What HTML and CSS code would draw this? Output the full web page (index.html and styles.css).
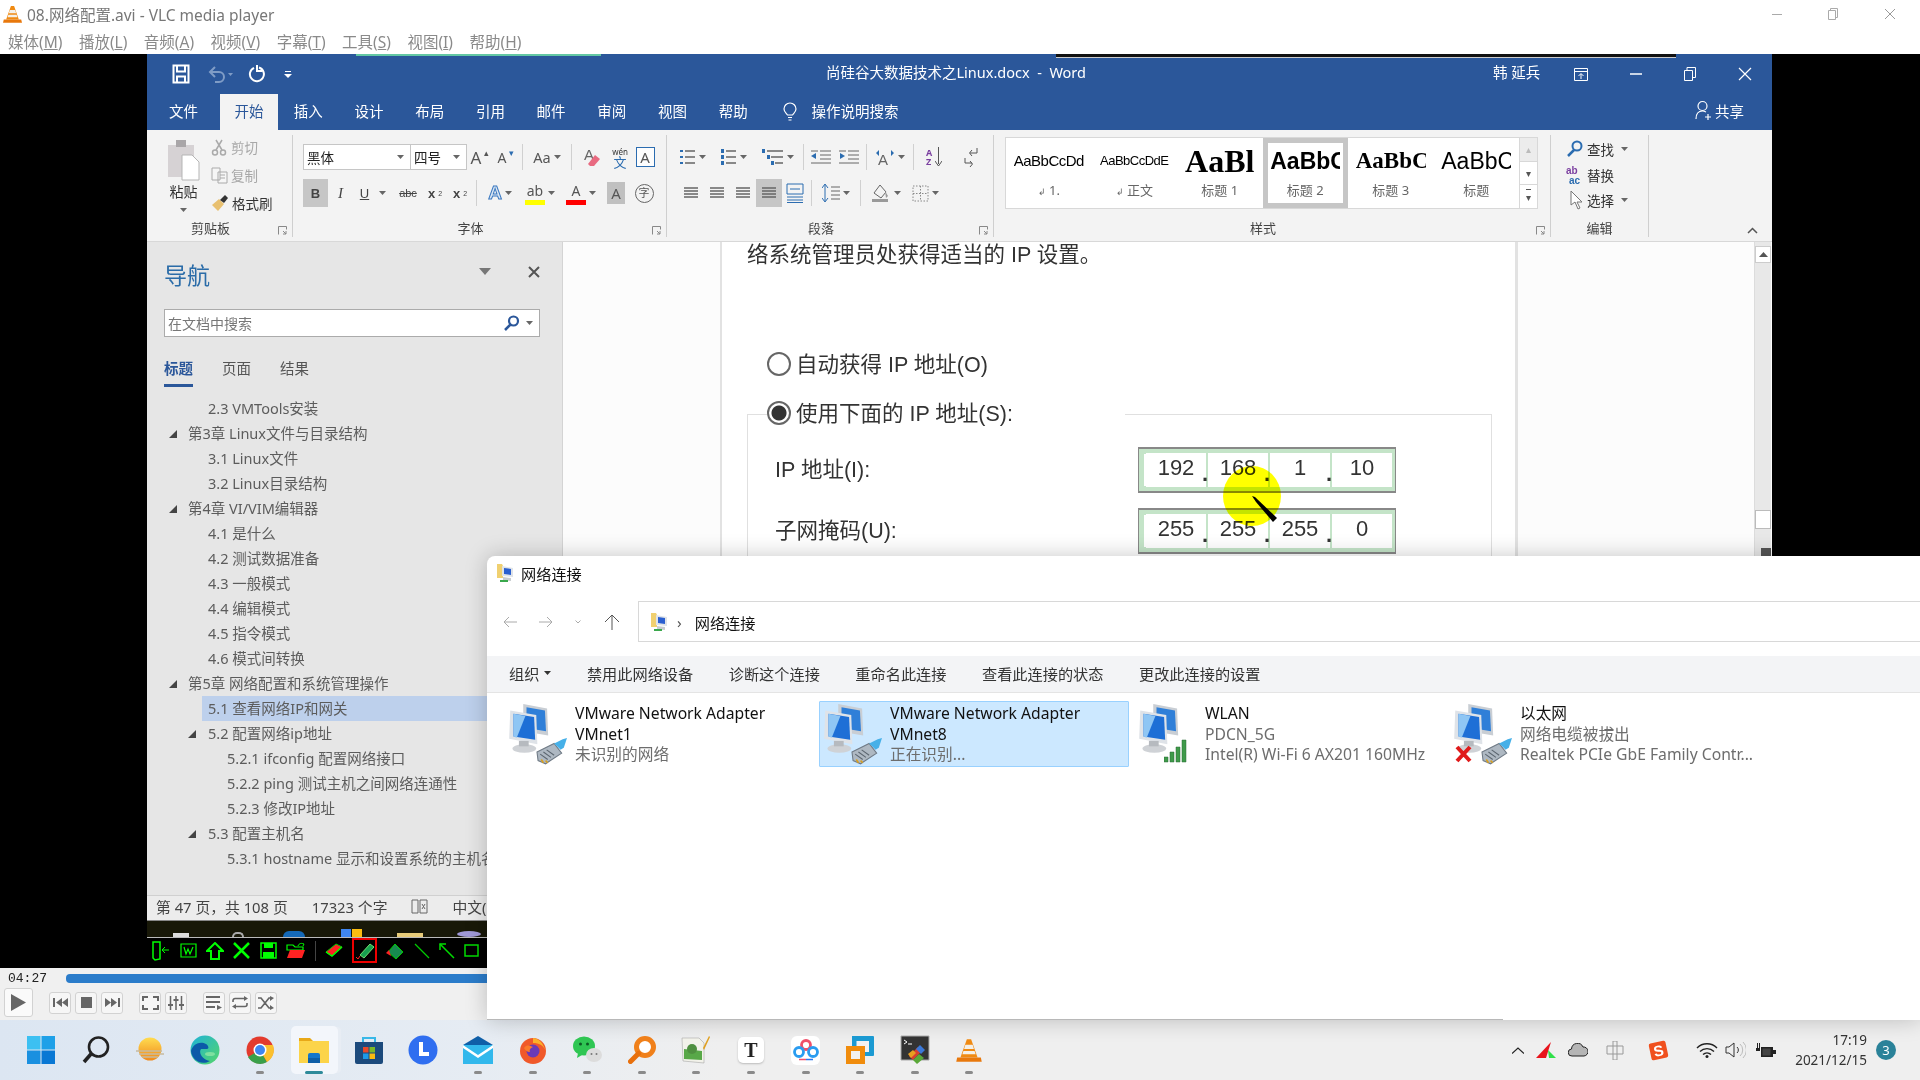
FILE: index.html
```html
<!DOCTYPE html>
<html lang="zh-CN">
<head>
  <meta charset="UTF-8">
  <title>08.网络配置.avi - VLC media player</title>
  <link rel="stylesheet" href="styles.css">
</head>
<body>

<svg class="defs" width="0" height="0">
  <symbol id="cone" viewBox="0 0 24 24">
    <path d="M10 2h4l6 17H4z" fill="#f08a12"/><path d="M8.600 7h6.800l1.200 4H7.400zM6.800 13h10.400l1 3H5.800z" fill="#f4f0e8"/>
    <path d="M1 19h22l1 4H0z" fill="#e8780c"/>
  </symbol>
  <symbol id="net" viewBox="0 0 48 48">
    <path d="M15 1l22 4 1 25-23-4z" fill="#c9ced4"/><path d="M18 4l17 3 1 19-18-3z" fill="#2f7fd8"/>
    <path d="M3 7l24 4 1 27-26-5z" fill="#dfe3e8"/><path d="M6 10l19 3 1 21-20-3z" fill="#1e6fd6"/><path d="M6 10l11 2-8 20-3-1z" fill="#8fc6f4"/>
    <ellipse cx="16" cy="42" rx="11" ry="4" fill="#cfd2d6"/><path d="M11 35h9v5h-9z" fill="#b6babf"/>
  </symbol>
  <symbol id="plug" viewBox="0 0 32 28">
    <path d="M2 14l16-8 7 9-15 10-7-3z" fill="#aeb8c2" stroke="#6f7a85"/>
    <path d="M5 16l7 5M8 14l7 5M11 12l7 5" stroke="#5c6670" fill="none"/><path d="M6 21l2 3M10 22l2 2" stroke="#d8a020" stroke-width="1.500"/>
    <path d="M18 6l8-4 4-1-3 9-3 2z" fill="#46b0e8"/>
  </symbol>
  <symbol id="netfolder" viewBox="0 0 18 20">
    <path d="M0 1h5l1 2v12H0z" fill="#f0d070"/><path d="M5 3l11 2v9l-11-1z" fill="#dfe3e8"/><path d="M7 5l7 1v6l-7-1z" fill="#2a5fd0"/>
    <path d="M6 14l8 1v3l-8-1z" fill="#c8ccd0"/><path d="M3 17h8v2H3z" fill="#3aa84c"/>
  </symbol>
  <symbol id="arrow" viewBox="0 0 7 4"><path d="M0 0h7L3.500 4z" fill="#666"/></symbol>
  <symbol id="launcher" viewBox="0 0 9 9"><path d="M.5 8.500V.5h8v3M5 5l3 3M8 5v3H5" fill="none" stroke="#888"/></symbol>
  <symbol id="lines" viewBox="0 0 16 14"><path d="M1 2h14M1 5h14M1 8h14M1 11h14" stroke="#666" stroke-width="1.500"/></symbol>
</svg>

<header class="vlc-title">
  <svg class="vlc-cone" width="19" height="22"><use href="#cone"/></svg>
  <span>08.网络配置.avi - VLC media player</span>
  <div class="win-btns">
    <span class="win-min"></span>
    <svg width="10" height="12" viewBox="0 0 10 12"><path d="M.5 2.500h7v9h-7zM2.500 2.500V.5h7v9H7.500" fill="none" stroke="#aaa"/></svg>
    <svg width="12" height="12" viewBox="0 0 12 12"><path d="M1 1l10 10M11 1L1 11" stroke="#999"/></svg>
  </div>
</header>
<nav class="vlc-menu">
  <span>媒体(<u>M</u>)</span><span>播放(<u>L</u>)</span><span>音频(<u>A</u>)</span><span>视频(<u>V</u>)</span>
  <span>字幕(<u>T</u>)</span><span>工具(<u>S</u>)</span><span>视图(<u>I</u>)</span><span>帮助(<u>H</u>)</span>
</nav>

<main class="video">
  <div class="word">
    <i class="bar-green"></i><i class="bar-black"></i>

    <div class="w-title">
      <div class="qat">
        <svg width="18" height="20" viewBox="0 0 18 20"><path d="M1.500 1.500h15v17h-15zM5 1.500v6h8v-6M5 18.500v-6h8v6" fill="none" stroke="#fff" stroke-width="2"/></svg>
        <svg class="qat-off" width="26" height="18" viewBox="0 0 26 18"><path d="M3 7h8a5 5 0 0 1 0 10H7M7 2L2 7l5 5" fill="none" stroke="#7f9cc6" stroke-width="2"/><path d="M20 8h5l-2.500 3z" fill="#7f9cc6"/></svg>
        <svg width="18" height="20" viewBox="0 0 18 20"><path d="M11 3.500a7 7 0 1 1-5 .3M9 1v6h5" fill="none" stroke="#fff" stroke-width="2"/></svg>
        <svg width="8" height="9" viewBox="0 0 8 9"><path d="M1 1h6v1H1zM0 4h8L4 8z" fill="#fff"/></svg>
      </div>
      <div class="w-name">尚硅谷大数据技术之Linux.docx &nbsp;-&nbsp; Word</div>
      <div class="w-user">韩 延兵</div>
      <div class="w-ctrl">
        <svg width="14" height="13" viewBox="0 0 14 13"><path d="M.5.500h13v12H.5zM.5 3.500h13M7 11V6M4.500 8L7 5.500 9.500 8" fill="none" stroke="#fff"/></svg>
        <svg width="12" height="12" viewBox="0 0 12 12"><path d="M0 6h12" stroke="#fff" stroke-width="1.500"/></svg>
        <svg width="12" height="14" viewBox="0 0 12 14"><path d="M.5 3.500h8v10h-8zM3 3.500V.5h8.500v10H8.500" fill="none" stroke="#fff"/></svg>
        <svg width="14" height="14" viewBox="0 0 14 14"><path d="M1 1l12 12M13 1L1 13" stroke="#fff" stroke-width="1.200"/></svg>
      </div>
    </div>

    <div class="w-tabs">
      <span class="tab tab-file">文件</span><span class="tab tab-on">开始</span><span class="tab">插入</span><span class="tab">设计</span>
      <span class="tab">布局</span><span class="tab">引用</span><span class="tab">邮件</span><span class="tab">审阅</span><span class="tab">视图</span><span class="tab">帮助</span>
      <svg class="bulb" width="14" height="20" viewBox="0 0 14 20"><path d="M4.500 13C3 11 1 9.500 1 7a6 6 0 0 1 12 0c0 2.500-2 4-3.500 6zM5 15.500h4M5.500 18h3" fill="none" stroke="#fff" stroke-width="1.200"/></svg>
      <span class="tell">操作说明搜索</span>
      <span class="share">
        <svg width="18" height="20" viewBox="0 0 18 20"><circle cx="7.500" cy="6" r="4.500" fill="none" stroke="#fff" stroke-width="1.200"/><path d="M1 19c0-5 2-8 6.500-8 1.500 0 2.500.5 3.500 1M13 14v6M10 17h6" fill="none" stroke="#fff" stroke-width="1.200"/></svg>
        共享
      </span>
    </div>

    <div class="ribbon">
      <section class="group g-clip">
        <div class="g-body clip">
          <div class="paste">
            <svg width="34" height="44" viewBox="0 0 34 44"><path d="M1 8h26v32H1z" fill="#d6d2d4"/><path d="M9 3h10v7H9z" fill="#a9a6a8"/><path d="M15 18h10l7 7v18H15z" fill="#fff" stroke="#b5b5b5"/></svg>
            <b>粘贴</b>
            <svg width="7" height="4"><use href="#arrow"/></svg>
          </div>
          <div class="clip-list">
            <span class="off"><svg width="17" height="17" viewBox="0 0 17 17"><circle cx="4" cy="13.500" r="2.500" fill="none" stroke="#aaa" stroke-width="1.500"/><circle cx="12" cy="13.500" r="2.500" fill="none" stroke="#aaa" stroke-width="1.500"/><path d="M5 11L11 1M11 11L5 1" stroke="#aaa" stroke-width="1.500"/></svg>剪切</span>
            <span class="off"><svg width="17" height="17" viewBox="0 0 17 17"><path d="M1 1h8v12H1zM7 5h9v11H7zM9 8h5M9 11h5" fill="#f6f6f6" stroke="#aaa"/></svg>复制</span>
            <span><svg width="18" height="18" viewBox="0 0 18 18"><path d="M1 11l7-6 5 5-6 7z" fill="#e8c070"/><path d="M9 6l5-5 3 3-4 5z" fill="#333"/></svg>格式刷</span>
          </div>
        </div>
        <div class="g-label">剪贴板<svg class="launch"><use href="#launcher"/></svg></div>
      </section>

      <section class="group g-font">
        <div class="g-body">
          <div class="r-row">
            <div class="combo c-name"><span>黑体</span><svg width="7" height="4"><use href="#arrow"/></svg></div>
            <div class="combo c-size"><span>四号</span><svg width="7" height="4"><use href="#arrow"/></svg></div>
            <span class="ic w26 big">A<sup>▴</sup></span>
            <span class="ic w26 small">A<sup class="blue">▾</sup></span>
            <i class="sep"></i>
            <span class="ic w42 aa">Aa<svg width="7" height="4"><use href="#arrow"/></svg></span>
            <i class="sep"></i>
            <span class="ic w34"><svg width="18" height="20" viewBox="0 0 18 20"><text x="1" y="13" class="svg-a">A</text><path d="M5 17l7-9 5 4-6 7H7z" fill="#e86a80"/></svg></span>
            <span class="ic w22 wen"><small>wén</small>文</span>
            <span class="ic w28"><span class="a-box">A</span></span>
          </div>
          <div class="r-row">
            <span class="ic fmt w25 on b">B</span>
            <span class="ic fmt w25 i">I</span>
            <span class="ic fmt w40 u"><u>U</u><svg width="7" height="4"><use href="#arrow"/></svg></span>
            <span class="ic fmt w30 abc">abc</span>
            <span class="ic fmt w24 x">x<sub>2</sub></span>
            <span class="ic fmt w26 x">x<sup>2</sup></span>
            <i class="sep"></i>
            <span class="ic w40"><span class="a-glow">A</span><svg width="7" height="4"><use href="#arrow"/></svg></span>
            <span class="ic w40"><span class="a-bar yel">ab</span><svg width="7" height="4"><use href="#arrow"/></svg></span>
            <span class="ic w42"><span class="a-bar red">A</span><svg width="7" height="4"><use href="#arrow"/></svg></span>
            <span class="ic w28"><span class="a-shade">A</span></span>
            <span class="ic w28"><span class="zi">字</span></span>
          </div>
        </div>
        <div class="g-label">字体<svg class="launch"><use href="#launcher"/></svg></div>
      </section>

      <section class="group g-para">
        <div class="g-body">
          <div class="r-row">
            <span class="ic w40"><svg width="16" height="16" viewBox="0 0 16 16"><path d="M5 2h10M5 8h10M5 14h10" stroke="#666" stroke-width="1.500"/><path d="M0 1h3v2H0zM0 7h3v2H0zM0 13h3v2H0z" fill="#2b6cb0"/></svg><svg width="7" height="4"><use href="#arrow"/></svg></span>
            <span class="ic w42"><svg width="16" height="16" viewBox="0 0 16 16"><path d="M5 2h10M5 8h10M5 14h10" stroke="#666" stroke-width="1.500"/><path d="M0 0h3v4H0zM0 6h3v4H0zM0 12h3v4H0z" fill="#2b6cb0"/></svg><svg width="7" height="4"><use href="#arrow"/></svg></span>
            <span class="ic w45"><svg width="22" height="16" viewBox="0 0 22 16"><path d="M5 2h16M9 8h12M13 14h8" stroke="#666" stroke-width="1.500"/><path d="M0 0h3v4H0zM5 6h3v4H5zM9 12h3v4H9z" fill="#2b6cb0"/></svg><svg width="7" height="4"><use href="#arrow"/></svg></span>
            <i class="sep"></i>
            <span class="ic w28"><svg width="20" height="16" viewBox="0 0 20 16"><path d="M9 2h11M9 6h11M9 10h11M0 14h20M0 2h7" stroke="#666"/><path d="M0 7l5-3v6z" fill="#2b6cb0"/></svg></span>
            <span class="ic w28"><svg width="20" height="16" viewBox="0 0 20 16"><path d="M9 2h11M9 6h11M9 10h11M0 14h20M0 2h7" stroke="#666"/><path d="M6 7L1 4v6z" fill="#2b6cb0"/></svg></span>
            <i class="sep"></i>
            <span class="ic w40"><svg width="20" height="17" viewBox="0 0 20 17"><text x="3" y="16" class="svg-a">A</text><path d="M1 4l3-3v6zM19 4l-3-3v6z" fill="#2b6cb0"/></svg><svg width="7" height="4"><use href="#arrow"/></svg></span>
            <i class="sep"></i>
            <span class="ic w34 az"><b>A<br>Z</b><svg width="7" height="20" viewBox="0 0 7 20"><path d="M3.500 0v17M0 14l3.500 5L7 14" fill="none" stroke="#555"/></svg></span>
            <span class="ic w40"><svg width="14" height="20" viewBox="0 0 14 20"><path d="M13 1v5H6M8 3L5.500 6 8 9M1 11v5h7M6 14l2.500 3L6 20" fill="none" stroke="#555"/></svg></span>
          </div>
          <div class="r-row para2">
            <span class="ic w26"><svg width="16" height="14"><use href="#lines"/></svg></span>
            <span class="ic w26"><svg width="16" height="14"><use href="#lines"/></svg></span>
            <span class="ic w26"><svg width="16" height="14"><use href="#lines"/></svg></span>
            <span class="ic w26 on"><svg width="16" height="14"><use href="#lines"/></svg></span>
            <span class="ic w26"><svg width="18" height="20" viewBox="0 0 18 20"><path d="M1 1h16v10H1zM1 14h16M1 17h16M1 19.500h16" fill="none" stroke="#2b6cb0"/><path d="M4 6h10" stroke="#2b6cb0"/></svg></span>
            <i class="sep"></i>
            <span class="ic w42"><svg width="18" height="20" viewBox="0 0 18 20"><path d="M3 2v16M0 5l3-4 3 4M0 15l3 4 3-4" fill="none" stroke="#2b6cb0"/><path d="M9 4h9M9 8h9M9 12h9M9 16h9" stroke="#666"/></svg><svg width="7" height="4"><use href="#arrow"/></svg></span>
            <i class="sep"></i>
            <span class="ic w44"><svg width="20" height="20" viewBox="0 0 20 20"><path d="M3 10l6-8 6 7-5 6z" fill="none" stroke="#666"/><path d="M14 8l3 5-2 2zM1 16h16v3H1z" fill="#9a9a9a"/></svg><svg width="7" height="4"><use href="#arrow"/></svg></span>
            <span class="ic w34"><svg width="17" height="17" viewBox="0 0 17 17"><path d="M1 1h15v15H1zM8.500 1v15M1 8.500h15" fill="none" stroke="#888" stroke-dasharray="1.500 1.500"/></svg><svg width="7" height="4"><use href="#arrow"/></svg></span>
          </div>
        </div>
        <div class="g-label">段落<svg class="launch"><use href="#launcher"/></svg></div>
      </section>

      <section class="group g-styles">
        <div class="g-body">
          <div class="gallery">
            <div class="st"><span class="st-p p1">AaBbCcDd</span><span class="st-n"><small>↲</small> 1.</span></div>
            <div class="st"><span class="st-p p2">AaBbCcDdE</span><span class="st-n"><small>↲</small> 正文</span></div>
            <div class="st"><span class="st-p p3">AaBl</span><span class="st-n">标题 1</span></div>
            <div class="st st-on"><span class="st-p p4">AaBbC</span><span class="st-n">标题 2</span></div>
            <div class="st"><span class="st-p p5">AaBbC</span><span class="st-n">标题 3</span></div>
            <div class="st"><span class="st-p p6">AaBbC</span><span class="st-n">标题</span></div>
            <div class="st-scroll">
              <span class="st-off">▴</span><span>▾</span><span class="st-more">▾</span>
            </div>
          </div>
        </div>
        <div class="g-label">样式<svg class="launch"><use href="#launcher"/></svg></div>
      </section>

      <section class="group g-edit">
        <div class="g-body edit">
          <span><svg width="18" height="18" viewBox="0 0 18 18"><circle cx="11" cy="6" r="4.500" fill="none" stroke="#2b6cb0" stroke-width="2"/><path d="M8 10l-6 6" stroke="#2b6cb0" stroke-width="2.500"/></svg>查找<svg class="edit-arrow" width="7" height="4"><use href="#arrow"/></svg></span>
          <span><svg width="18" height="20" viewBox="0 0 18 20"><text x="0" y="9" class="svg-ab pur">ab</text><text x="3" y="19" class="svg-ab blu">ac</text></svg>替换</span>
          <span><svg width="18" height="20" viewBox="0 0 18 20"><path d="M5 1v14l4-3 3 7 2-1-3-6h5z" fill="#fff" stroke="#777"/></svg>选择<svg class="edit-arrow" width="7" height="4"><use href="#arrow"/></svg></span>
        </div>
        <div class="g-label">编辑</div>
      </section>
      <svg class="collapse" width="11" height="7" viewBox="0 0 11 7"><path d="M1 6l4.500-4.500L10 6" fill="none" stroke="#555" stroke-width="1.500"/></svg>
    </div>

    <div class="w-main">
      <aside class="nav">
        <div class="nav-head">
          <h2>导航</h2>
          <svg width="12" height="7" viewBox="0 0 12 7"><path d="M0 0h12L6 7z" fill="#777"/></svg>
          <svg class="nav-x" width="12" height="12" viewBox="0 0 12 12"><path d="M1 1l10 10M11 1L1 11" stroke="#555" stroke-width="2"/></svg>
        </div>
        <div class="nav-search">
          <span>在文档中搜索</span>
          <svg width="17" height="17" viewBox="0 0 17 17"><circle cx="10.500" cy="6" r="4.500" fill="none" stroke="#2b579a" stroke-width="2.200"/><path d="M7.500 9.500L2 15" stroke="#2b579a" stroke-width="2.500"/></svg>
          <svg width="7" height="4"><use href="#arrow"/></svg>
        </div>
        <div class="nav-tabs"><span class="nt-on">标题</span><span>页面</span><span>结果</span></div>
        <ul class="nav-list">
          <li class="l2">2.3 VMTools安装</li>
          <li class="l1 open">第3章 Linux文件与目录结构</li>
          <li class="l2">3.1 Linux文件</li>
          <li class="l2">3.2 Linux目录结构</li>
          <li class="l1 open">第4章 VI/VIM编辑器</li>
          <li class="l2">4.1 是什么</li>
          <li class="l2">4.2 测试数据准备</li>
          <li class="l2">4.3 一般模式</li>
          <li class="l2">4.4 编辑模式</li>
          <li class="l2">4.5 指令模式</li>
          <li class="l2">4.6 模式间转换</li>
          <li class="l1 open">第5章 网络配置和系统管理操作</li>
          <li class="l2 cur">5.1 查看网络IP和网关</li>
          <li class="l2 open">5.2 配置网络ip地址</li>
          <li class="l3">5.2.1 ifconfig 配置网络接口</li>
          <li class="l3">5.2.2 ping 测试主机之间网络连通性</li>
          <li class="l3">5.2.3 修改IP地址</li>
          <li class="l2 open">5.3 配置主机名</li>
          <li class="l3">5.3.1 hostname 显示和设置系统的主机名</li>
        </ul>
      </aside>

      <div class="doc">
        <article class="page">
          <p class="doc-line">络系统管理员处获得适当的 IP 设置。</p>
          <div class="radio-row"><i class="radio"></i>自动获得 IP 地址(O)</div>
          <div class="radio-row"><i class="radio radio-on"></i>使用下面的 IP 地址(S):</div>
          <div class="ip-frame">
            <div class="ip-row"><span>IP 地址(I):</span>
              <div class="ip-box"><b>192</b><em>.</em><b>168</b><em>.</em><b>1</b><em>.</em><b>10</b></div>
            </div>
            <div class="ip-row"><span>子网掩码(U):</span>
              <div class="ip-box"><b>255</b><em>.</em><b>255</b><em>.</em><b>255</b><em>.</em><b>0</b></div>
            </div>
          </div>
          <div class="pointer">
            <svg width="26" height="26" viewBox="0 0 26 26"><path d="M0 0l3 1 22 21-4 4L4 6z" fill="#000"/></svg>
          </div>
        </article>
        <div class="scroll">
          <span class="sb-up"><svg width="9" height="5" viewBox="0 0 9 5"><path d="M4.500 0L9 5H0z" fill="#555"/></svg></span>
          <span class="sb-thumb"></span>
          <span class="sb-mark"></span>
        </div>
      </div>
    </div>

    <footer class="w-status">
      <span>第 47 页，共 108 页</span><span class="st-words">17323 个字</span>
      <svg width="17" height="15" viewBox="0 0 17 15"><path d="M1 1h6v13H1zM9 1h7v13H9zM11 5l3 5M14 5l-3 5" fill="none" stroke="#666"/></svg>
      <span>中文(中国)</span>
    </footer>

    <div class="w-desk">
      <i class="d-white"></i><i class="d-ring"></i><i class="d-dome"></i><i class="d-blue"></i><i class="d-yel"></i><i class="d-folder"></i><i class="d-puff"></i>
    </div>
    <div class="pen-bar">
      <svg width="20" height="20" viewBox="0 0 20 20"><path d="M2 1h7v17l-5 1-2-2zM9 1v15" fill="none" stroke="#0f0" stroke-width="1.500"/><path d="M18 9h-6M14 6l-3 3 3 3" fill="none" stroke="#0f0"/></svg>
      <svg width="17" height="15" viewBox="0 0 17 15"><path d="M1 1h15v13H1zM4 4l2 7 2-5 2 5 3-7" fill="none" stroke="#0f0" stroke-width="1.200"/></svg>
      <svg width="18" height="18" viewBox="0 0 18 18"><path d="M9 1l8 8h-4v8H5V9H1z" fill="none" stroke="#0f0" stroke-width="2"/></svg>
      <svg width="17" height="17" viewBox="0 0 17 17"><path d="M1 1l15 15M16 1L1 16" stroke="#0f0" stroke-width="2.500"/></svg>
      <svg width="17" height="17" viewBox="0 0 17 17"><path d="M1 1h15v15H1z" fill="none" stroke="#0f0" stroke-width="1.500"/><path d="M4 1h9v5H4zM3 10h11v6H3z" fill="#0f0"/></svg>
      <svg width="20" height="17" viewBox="0 0 20 17"><path d="M1 3h6l2 2h8v3H1z" fill="none" stroke="#0f0" stroke-width="1.200"/><path d="M1 16l3-8h15l-3 8z" fill="#f22"/><path d="M12 4c1-3 4-3 6-2l-1 2" fill="none" stroke="#0f0"/></svg>
      <i class="pen-sep"></i>
      <svg width="18" height="15" viewBox="0 0 18 15"><path d="M1 9l10-8 6 3-10 9z" fill="#f22" stroke="#0c0"/><path d="M1 9l6 4 10-9" fill="none" stroke="#0f0" stroke-width="1.500"/></svg>
      <span class="pen-on"><svg width="20" height="18" viewBox="0 0 20 18"><path d="M5 13L15 2l4 3L9 16z" fill="#17a050" stroke="#6fe06f"/><path d="M1 15l2 2 2-3" fill="none" stroke="#f22"/></svg></span>
      <svg width="18" height="18" viewBox="0 0 18 18"><path d="M2 10l7-8 8 8-7 7z" fill="#178a50" stroke="#0c0"/><path d="M0 11l3-3 2 6z" fill="#f22"/></svg>
      <svg width="16" height="16" viewBox="0 0 16 16"><path d="M1 1l14 14" stroke="#0c0" stroke-width="1.200"/></svg>
      <svg width="16" height="16" viewBox="0 0 16 16"><path d="M1 1l14 14" stroke="#0d0" stroke-width="1.500"/><path d="M1 7V1h6" fill="none" stroke="#0d0" stroke-width="1.500"/></svg>
      <svg width="15" height="13" viewBox="0 0 15 13"><path d="M1 1h13v11H1z" fill="none" stroke="#0d0" stroke-width="1.500"/></svg>
    </div>
  </div>
</main>

<section class="vlc-ctl">
  <div class="seek"><span class="time">04:27</span><div class="seek-track"></div></div>
  <div class="ctl-row">
    <button class="cb cb-play"><svg width="15" height="17" viewBox="0 0 15 17"><path d="M0 0l15 8.500L0 17z" fill="#666"/></svg></button>
    <div class="cb-group">
      <button class="cb"><svg width="15" height="9" viewBox="0 0 15 9"><path d="M0 0h2v9H0zM9 0v9L3 4.500zM15 0v9L9 4.500z" fill="#666"/></svg></button>
      <button class="cb"><svg width="11" height="11"><path d="M0 0h11v11H0z" fill="#666"/></svg></button>
      <button class="cb"><svg width="15" height="9" viewBox="0 0 15 9"><path d="M15 0h-2v9h2zM6 0v9l6-4.500zM0 0v9l6-4.500z" fill="#666"/></svg></button>
    </div>
    <div class="cb-group">
      <button class="cb"><svg width="17" height="14" viewBox="0 0 17 14"><path d="M1 5V1h5M11 1h5v4M16 9v4h-5M6 13H1V9" fill="none" stroke="#666" stroke-width="2"/></svg></button>
      <button class="cb"><svg width="16" height="14" viewBox="0 0 16 14"><path d="M2.500 0v14M8 0v14M13.500 0v14" stroke="#666" stroke-width="1.500"/><path d="M0 8h5v2H0zM5.500 3h5v2h-5zM11 8h5v2h-5z" fill="#666"/></svg></button>
    </div>
    <div class="cb-group">
      <button class="cb"><svg width="16" height="14" viewBox="0 0 16 14"><path d="M0 1h14M0 6h14M0 11h9" stroke="#666" stroke-width="1.800"/><path d="M11 9l5 2.500-5 2.500z" fill="#666"/></svg></button>
      <button class="cb"><svg width="16" height="13" viewBox="0 0 16 13"><path d="M1 6V4.500a2 2 0 0 1 2-2h11M15 7v1.500a2 2 0 0 1-2 2H2" fill="none" stroke="#666" stroke-width="1.600"/><path d="M12 0l4 2.500L12 5zM4 8l-4 2.500L4 13z" fill="#666"/></svg></button>
      <button class="cb"><svg width="16" height="14" viewBox="0 0 16 14"><path d="M0 2h3l8 10h2M0 12h3l8-10h2" fill="none" stroke="#666" stroke-width="1.700"/><path d="M12 0l4 2-4 3zM12 9l4 3-4 2z" fill="#666"/></svg></button>
    </div>
  </div>
</section>

<section class="explorer">
  <div class="ex-title"><svg width="18" height="20"><use href="#netfolder"/></svg>网络连接</div>
  <div class="ex-nav">
    <svg class="ex-dim" width="14" height="12" viewBox="0 0 14 12"><path d="M14 6H1M6 1L1 6l5 5" fill="none" stroke="#aaa"/></svg>
    <svg class="ex-dim" width="14" height="12" viewBox="0 0 14 12"><path d="M0 6h13M8 1l5 5-5 5" fill="none" stroke="#aaa"/></svg>
    <svg class="ex-dim" width="6" height="4" viewBox="0 0 6 4"><path d="M.5.500L3 3 5.500.5" fill="none" stroke="#aaa"/></svg>
    <svg class="ex-up" width="16" height="16" viewBox="0 0 16 16"><path d="M8 16V1M1 8l7-7 7 7" fill="none" stroke="#555"/></svg>
    <div class="ex-addr">
      <svg width="18" height="20"><use href="#netfolder"/></svg>
      <span class="ex-crumb">›</span>
      <span>网络连接</span>
    </div>
  </div>
  <div class="ex-tools">
    <span>组织<svg width="7" height="4" viewBox="0 0 7 4"><path d="M0 0h7L3.500 4z" fill="#333"/></svg></span>
    <span>禁用此网络设备</span><span>诊断这个连接</span><span>重命名此连接</span><span>查看此连接的状态</span><span>更改此连接的设置</span>
  </div>
  <div class="ex-list">
    <div class="tile">
      <div class="t-icon"><svg class="t-net" width="52" height="52"><use href="#net"/></svg><svg class="t-badge" width="36" height="30"><use href="#plug"/></svg></div>
      <div class="t-text"><span class="t-main">VMware Network Adapter VMnet1</span><span>未识别的网络</span></div>
    </div>
    <div class="tile tile-on">
      <div class="t-icon"><svg class="t-net" width="52" height="52"><use href="#net"/></svg><svg class="t-badge" width="36" height="30"><use href="#plug"/></svg></div>
      <div class="t-text"><span class="t-main">VMware Network Adapter VMnet8</span><span>正在识别...</span></div>
    </div>
    <div class="tile">
      <div class="t-icon"><svg class="t-net" width="52" height="52"><use href="#net"/></svg>
        <svg class="t-badge" width="26" height="26" viewBox="0 0 26 26"><path d="M0 20h4v5H0zM6 15h4v10H6zM12 10h4v15h-4zM18 3h4v22h-4z" fill="#3f9a4a" stroke="#2b6a35" stroke-width=".5"/></svg></div>
      <div class="t-text"><span class="t-main">WLAN</span><span>PDCN_5G</span><span>Intel(R) Wi-Fi 6 AX201 160MHz</span></div>
    </div>
    <div class="tile">
      <div class="t-icon"><svg class="t-net" width="52" height="52"><use href="#net"/></svg><svg class="t-badge" width="36" height="30"><use href="#plug"/></svg>
        <svg class="t-x" width="17" height="18" viewBox="0 0 17 18"><path d="M2 2l13 14M15 2L2 16" stroke="#e01b1b" stroke-width="4"/></svg></div>
      <div class="t-text"><span class="t-main">以太网</span><span>网络电缆被拔出</span><span>Realtek PCIe GbE Family Contr...</span></div>
    </div>
  </div>
</section>

<footer class="taskbar">
  <div class="apps">
    <span class="app"><svg width="30" height="30" viewBox="0 0 30 30"><path d="M1 1h13.500v13.500H1z" fill="#3cc0f2"/><path d="M15.500 1H29v13.500H15.500z" fill="#1ea0e8"/><path d="M1 15.500h13.500V29H1z" fill="#1a90e0"/><path d="M15.500 15.500H29V29H15.500z" fill="#0a78d4"/></svg></span>
    <span class="app"><svg width="28" height="28" viewBox="0 0 28 28"><circle cx="16.500" cy="11" r="9.500" fill="none" stroke="#222" stroke-width="2.600"/><path d="M9 18l-7 8" stroke="#222" stroke-width="3.500"/></svg></span>
    <span class="app"><svg width="28" height="28" viewBox="0 0 28 28"><defs><linearGradient id="sun" x1="0" y1="0" x2="0" y2="1"><stop offset="0" stop-color="#ffdc50"/><stop offset="1" stop-color="#f08a1c"/></linearGradient></defs><circle cx="14" cy="13" r="11.500" fill="url(#sun)"/><path d="M0 15h26M3 18h25M6 21h16" stroke="#c8bba0" stroke-width="1.500"/></svg></span>
    <span class="app"><svg width="30" height="30" viewBox="0 0 30 30"><defs><linearGradient id="edge" x1="0" y1="0" x2="1" y2="1"><stop offset="0" stop-color="#1fb2d8"/><stop offset="1" stop-color="#55d66a"/></linearGradient></defs><circle cx="15" cy="15" r="14.500" fill="url(#edge)"/><path d="M1 16c2-8 10-10 15-7 3 2 3 5 1 5h-6c-3 4 2 11 9 12-9 5-18-1-19-10z" fill="#0c5aa8"/><ellipse cx="20" cy="19" rx="5" ry="2" fill="#7fe0a0"/></svg></span>
    <span class="app app-dot"><svg width="28" height="28" viewBox="0 0 28 28"><circle cx="14" cy="14" r="13.500" fill="#e33b2e"/><path d="M14 14L2 21A14 14 0 0 0 21 26z" fill="#3aa04a"/><path d="M14 14l7 12A14 14 0 0 0 27 9H14z" fill="#fbc02d"/><circle cx="14" cy="14" r="6.500" fill="#fff"/><circle cx="14" cy="14" r="5" fill="#3f86f0"/></svg></span>
    <span class="app app-on">
      <svg width="32" height="28" viewBox="0 0 32 28"><path d="M1 2h11l3 3H1z" fill="#e8a818"/><path d="M1 5h30v22H1z" fill="#fcd44a"/><path d="M10 19a2 2 0 0 1 2-2h8a2 2 0 0 1 2 2v8H10z" fill="#1476cc"/><path d="M10 22h12v5H10z" fill="#0f5fa8"/></svg>
    </span>
    <span class="app"><svg width="30" height="30" viewBox="0 0 30 30"><path d="M1 7h28v20a2 2 0 0 1-2 2H3a2 2 0 0 1-2-2z" fill="#1c4a7c"/><path d="M9 7V3h12v4" fill="none" stroke="#38b8e8" stroke-width="2"/><path d="M9 12h5.500v5.500H9z" fill="#e84a2a"/><path d="M15.500 12H21v5.500h-5.500z" fill="#7cb828"/><path d="M9 18.500h5.500V24H9z" fill="#1e9ae8"/><path d="M15.500 18.500H21V24h-5.500z" fill="#fbbc10"/></svg></span>
    <span class="app"><svg width="30" height="30" viewBox="0 0 30 30"><circle cx="15" cy="15" r="14.500" fill="#2f6ef0"/><path d="M11 7h4v10h6v4H11z" fill="#fff"/></svg></span>
    <span class="app app-dot"><svg width="30" height="28" viewBox="0 0 30 28"><path d="M0 9L15 0l15 9v3H0z" fill="#0f5fa8"/><path d="M0 9h30v19H0z" fill="#32b8ec"/><path d="M0 9l15 10L30 9v3L15 22 0 12z" fill="#fff"/></svg></span>
    <span class="app app-dot"><svg width="28" height="28" viewBox="0 0 28 28"><circle cx="14" cy="15" r="13" fill="#f0592a"/><path d="M14 2c4 0 8 3 10 7l3 6C24 9 20 7 14 7z" fill="#fbb02a"/><circle cx="14" cy="15" r="6.500" fill="#6a3ab8"/><path d="M5 12c3-4 6-2 9-1-3 1-4 3-3 5-3 0-5-2-6-4z" fill="#fb7a2a"/></svg></span>
    <span class="app app-dot"><svg width="30" height="28" viewBox="0 0 30 28"><ellipse cx="12" cy="10" rx="11" ry="9.500" fill="#2fc653"/><path d="M6 17l-1 5 5-3z" fill="#2fc653"/><circle cx="8.500" cy="8" r="1.500" fill="#0c5a24"/><circle cx="15.500" cy="8" r="1.500" fill="#0c5a24"/><ellipse cx="22" cy="19" rx="8" ry="7" fill="#dcdcdc"/><circle cx="19.500" cy="18" r="1" fill="#777"/><circle cx="24.500" cy="18" r="1" fill="#777"/></svg></span>
    <span class="app app-dot"><svg width="28" height="28" viewBox="0 0 28 28"><circle cx="17" cy="11" r="8.500" fill="#fff" stroke="#f0801a" stroke-width="5"/><path d="M10.500 17.500L2.500 25.500" stroke="#e8700c" stroke-width="5" stroke-linecap="round"/></svg></span>
    <span class="app app-dot"><svg width="30" height="30" viewBox="0 0 30 30"><path d="M1 3h17l5 5v20L2 26z" fill="#f2f2ea" stroke="#999" stroke-width=".5"/><path d="M3 14l18 2v9L3 24z" fill="#58a848"/><circle cx="11" cy="14" r="5" fill="#4f9040"/><path d="M22 13L28 1l1 1-6 13z" fill="#e0a020"/></svg></span>
    <span class="app app-dot"><span class="t-app">T</span></span>
    <span class="app app-dot"><span class="baidu"><svg width="26" height="22" viewBox="0 0 26 22"><circle cx="13" cy="6" r="4.500" fill="none" stroke="#f0506a" stroke-width="2.800"/><circle cx="6" cy="13" r="4.500" fill="none" stroke="#2a9cf0" stroke-width="2.800"/><circle cx="20" cy="13" r="4.500" fill="none" stroke="#2a9cf0" stroke-width="2.800"/><path d="M6 20.500h7" stroke="#f0506a" stroke-width="1.500"/><path d="M13 20.500h7" stroke="#2a78f0" stroke-width="1.500"/></svg></span></span>
    <span class="app app-dot"><svg width="30" height="30" viewBox="0 0 30 30"><path d="M7 1h21a1 1 0 0 1 1 1v18a1 1 0 0 1-1 1H7z" fill="#1b9ad2"/><path d="M11.500 6H24v11H11.500z" fill="#f2f2f2"/><path d="M1 11h19v18H1z" fill="#f08c0c"/><path d="M6 16h9v8H6z" fill="#f2f2f2"/></svg></span>
    <span class="app app-dot"><svg width="30" height="30" viewBox="0 0 30 30"><path d="M1 1h28v24H1z" fill="#333" stroke="#aaa"/><path d="M4 5l3 2-3 2M8 9h4" stroke="#fff" fill="none"/><path d="M9 21l9-9 4 4-9 9z" fill="#d84030"/><path d="M16 14l4-4 5 5-4 4z" fill="#3a78d8"/><path d="M13 25l6-6 5 4-7 6z" fill="#5aa838"/><path d="M8 19l5-4 3 3-5 5z" fill="#e8a020"/></svg></span>
    <span class="app app-dot"><svg width="26" height="30" viewBox="0 0 24 28"><use href="#cone"/></svg></span>
  </div>
  <div class="tray">
    <svg width="12" height="7" viewBox="0 0 12 7"><path d="M0 6.500L6 1l6 5.500" fill="none" stroke="#222" stroke-width="1.200"/></svg>
    <svg width="20" height="16" viewBox="0 0 20 16"><path d="M0 16L15 0l-5 16z" fill="#e8141c"/><path d="M12 8l8 8h-7z" fill="#2fe04a"/></svg>
    <svg width="20" height="14" viewBox="0 0 20 14"><path d="M4 13a3.500 3.500 0 0 1-.5-7A6 6 0 0 1 15 4a4.500 4.500 0 0 1 1 9z" fill="#b5b5b5" stroke="#222"/></svg>
    <span class="t-zh"><svg width="18" height="19" viewBox="0 0 18 19"><path d="M1 5h16v8H1zM7 0h4v19H7z" fill="none" stroke="#999"/></svg></span>
    <span class="t-s">S</span>
    <svg width="22" height="16" viewBox="0 0 22 16"><path d="M1 6a14 14 0 0 1 20 0M4 9.500a10 10 0 0 1 14 0M7 12.500a6 6 0 0 1 8 0" fill="none" stroke="#222" stroke-width="1.400"/><circle cx="11" cy="14.500" r="1.500" fill="#222"/></svg>
    <svg class="t-spk" width="21" height="16" viewBox="0 0 21 16"><path d="M1 5h3l5-4v14l-5-4H1z" fill="#eee" stroke="#333"/><path d="M12 5a4 4 0 0 1 0 6" fill="none" stroke="#333"/><path d="M15 2a8 8 0 0 1 0 12M18 0a11 11 0 0 1 0 16" fill="none" stroke="#bbb"/></svg>
    <svg class="t-bat" width="20" height="16" viewBox="0 0 20 16"><path d="M5 5h12v10H5z" fill="#222"/><path d="M17 8h3v4h-3zM0 6h4v3H0zM1 1h1v5H1zM3 1h1v5H3z" fill="#222"/><path d="M6.500 6.500h8v7h-8z" fill="#444"/></svg>
    <div class="clock"><span>17:19</span><span>2021/12/15</span></div>
    <span class="badge">3</span>
  </div>
</footer>

<div class="highlight"></div>
</body>
</html>
```

FILE: styles.css
```css
* {
  box-sizing: border-box;
}

html, body {
  margin: 0;
  height: 1080px;
  overflow: hidden;
}

body {
  width: 1920px;
  position: relative;
  display: flex;
  flex-direction: column;
  font-family: "Noto Sans", "Noto Sans CJK SC", sans-serif;
  background: #fff;
}

.defs {
  position: absolute;
}

svg {
  flex: none;
}

/* VLC window chrome */
.vlc-title {
  height: 28px;
  display: flex;
  align-items: center;
  padding-left: 3px;
  color: #777;
  font-size: 15.500px;
  background: #fff;
}

.vlc-cone {
  margin-right: 5px;
}

.win-btns {
  margin-left: auto;
  display: flex;
  align-items: center;
  gap: 46px;
  padding-right: 24px;
}

.win-min {
  width: 10px;
  border-top: 1px solid #aaa;
}

.vlc-menu {
  height: 26px;
  display: flex;
  align-items: center;
  gap: 16.500px;
  padding-left: 8px;
  color: #8a8a8a;
  font-size: 15.500px;
  background: #fff;
}

.video {
  height: 914px;
  background: #000;
  padding-left: 147px;
}

/* Word */
.word {
  position: relative;
  width: 1625px;
  height: 914px;
  display: flex;
  flex-direction: column;
  color: #444;
  font-size: 14px;
  background: #e6e6e6;
}

.bar-green {
  position: absolute;
  left: 209px;
  top: 0;
  width: 245px;
  height: 2px;
  background: #63c8a4;
}

.bar-black {
  position: absolute;
  left: 909px;
  top: 0;
  width: 620px;
  height: 3px;
  background: #111;
  box-shadow: 0 1px 0 #ccc;
}

.w-title {
  height: 40px;
  display: flex;
  align-items: center;
  color: #fff;
  background: #2b579a;
}

.qat {
  display: flex;
  align-items: center;
  gap: 18px;
  padding-left: 25px;
  width: 340px;
}

.qat-off {
  margin-right: -4px;
}

.w-name {
  width: 600px;
  padding: 0 0 6px 339px;
  white-space: nowrap;
  font-size: 14.500px;
}

.w-user {
  margin-left: 406px;
  padding-bottom: 6px;
  font-size: 14.500px;
}

.w-ctrl {
  margin-left: 34px;
  display: flex;
  align-items: center;
  gap: 42px;
}

.w-tabs {
  height: 36px;
  display: flex;
  align-items: stretch;
  color: #fff;
  font-size: 14.500px;
  background: #2b579a;
}

.tab {
  width: 60.700px;
  padding-bottom: 4px;
  display: flex;
  align-items: center;
  justify-content: center;
}

.tab-file {
  width: 73px;
}

.tab-on {
  width: 58px;
  color: #2b579a;
  background: #f3f3f3;
}

.bulb {
  align-self: center;
  margin-left: 19px;
}

.tell {
  display: flex;
  align-items: center;
  padding-bottom: 4px;
  margin-left: 15px;
}

.share {
  margin-left: auto;
  margin-right: 28px;
  padding-bottom: 4px;
  display: flex;
  align-items: center;
  gap: 2px;
}

.ribbon {
  position: relative;
  height: 112px;
  display: flex;
  padding: 5px 0 4px;
  background: #f3f3f3;
  border-bottom: 1px solid #d8d8d8;
}

.group {
  display: flex;
  flex-direction: column;
  border-right: 1px solid #cfcfcf;
}

.g-body {
  flex: 1;
  min-height: 0;
}

.g-label {
  position: relative;
  height: 24px;
  padding-top: 5px;
  display: flex;
  align-items: center;
  justify-content: center;
  font-size: 13px;
  color: #444;
}

.g-clip .g-label,
.g-font .g-label,
.g-para .g-label,
.g-styles .g-label {
  padding-right: 18px;
}

.launch {
  position: absolute;
  right: 5px;
  bottom: 2px;
  width: 9px;
  height: 9px;
}

.g-clip { width: 146px; }
.g-font { width: 374px; }
.g-para { width: 327px; }
.g-styles { width: 557px; }
.g-edit { width: 98px; }

.clip {
  display: flex;
  padding: 2px 0 0 9px;
}

.paste {
  width: 55px;
  display: flex;
  flex-direction: column;
  align-items: center;
  color: #333;
  font-size: 14px;
}

.paste b {
  font-weight: 400;
  line-height: 20px;
  margin-top: 1px;
}

.paste svg:last-child {
  margin-top: 6px;
}

.clip-list {
  display: flex;
  flex-direction: column;
  gap: 8px;
  font-size: 13.500px;
  color: #333;
}

.clip-list span {
  display: flex;
  align-items: center;
  height: 20px;
  gap: 3px;
}

.clip-list .off {
  color: #a8a8a8;
}

.g-font .g-body {
  padding: 8px 0 0 10px;
}

.r-row {
  display: flex;
  align-items: center;
  height: 28px;
}

.r-row + .r-row {
  margin-top: 8px;
}

.combo {
  height: 26px;
  display: flex;
  align-items: center;
  justify-content: space-between;
  padding: 0 6px 0 3px;
  font-size: 13.500px;
  background: #fff;
  border: 1px solid #c6c6c6;
  color: #222;
}

.c-name { width: 108px; }
.c-size { width: 56px; border-left: 0; }

.ic {
  height: 28px;
  display: flex;
  align-items: center;
  justify-content: center;
  gap: 3px;
  color: #555;
  flex: none;
  position: relative;
}

.w22 { width: 22px; }
.w24 { width: 24px; }
.w25 { width: 25px; }
.w26 { width: 26px; }
.w28 { width: 28px; }
.w30 { width: 30px; }
.w34 { width: 34px; }
.w40 { width: 40px; }
.w42 { width: 42px; }
.w44 { width: 44px; }
.w45 { width: 45px; }

.on {
  background: #c6c6c6;
}

.sep {
  width: 1px;
  height: 26px;
  margin: 0 3px;
  background: #d0d0d0;
  flex: none;
}

.big { font-size: 17px; }
.small { font-size: 14px; }
.big sup, .small sup { font-size: 9px; color: #555; margin-top: -10px; }
.small sup.blue { color: #2b6cb0; }
.aa { font-size: 14.500px; }

.wen {
  flex-direction: column;
  gap: 0;
  color: #2b6cb0;
  line-height: 11px;
  font-size: 13px;
}

.wen small {
  font-size: 8px;
  color: #333;
}

.a-box {
  display: block;
  width: 19px;
  height: 20px;
  line-height: 18px;
  text-align: center;
  font-size: 15px;
  border: 1px solid #2b6cb0;
  background: #fdfdfd;
}

.svg-a {
  font: 15px "Liberation Sans", sans-serif;
  fill: #666;
}

.svg-ab {
  font: 700 10px "Liberation Sans", sans-serif;
}

.pur { fill: #7b3fa0; }
.blu { fill: #2b6cb0; }

.fmt {
  font-family: "Liberation Sans", sans-serif;
  font-size: 13px;
  color: #444;
}

.b { font-weight: 700; }
.i { font-family: "Liberation Serif", serif; font-style: italic; font-size: 15px; }
.u { gap: 10px; }
.abc { font-size: 11px; text-decoration: line-through; }
.x { font-weight: 700; }
.x sub, .x sup { font-size: 7px; font-weight: 400; }

.a-glow {
  font: 700 19px "Liberation Sans", sans-serif;
  color: #dce8f4;
  -webkit-text-stroke: 1px #3a78c0;
}

.a-bar {
  display: block;
  width: 20px;
  padding-bottom: 1px;
  text-align: center;
  font-size: 14px;
  line-height: 17px;
}

.a-bar.yel { border-bottom: 5px solid #ff0; }
.a-bar.red { border-bottom: 5px solid #f00; }

.a-shade {
  display: block;
  width: 18px;
  height: 22px;
  line-height: 22px;
  text-align: center;
  font-size: 15px;
  background: #c0c0c0;
}

.zi {
  display: block;
  width: 19px;
  height: 19px;
  line-height: 16px;
  text-align: center;
  font-size: 11px;
  border: 1px solid #666;
  border-radius: 50%;
}

.g-para .g-body {
  padding: 8px 0 0 6px;
}

.para2 {
  margin-left: 5px;
}

.az {
  font-size: 9px;
  line-height: 9px;
  color: #7b3fa0;
}

.g-styles .g-body {
  padding: 2px 12px 0 11px;
}

.gallery {
  height: 72px;
  display: flex;
  background: #fff;
  border: 1px solid #d8d8d8;
}

.st {
  width: 85.500px;
  height: 70px;
  padding: 7px 8px 0;
  overflow: hidden;
  display: flex;
  flex-direction: column;
  align-items: center;
  color: #000;
  flex: none;
}

.st-on {
  padding: 2px 3px 0;
  border: 5px solid #c6c6c6;
}

.st-p {
  display: block;
  width: 70px;
  height: 32px;
  overflow: hidden;
  white-space: nowrap;
  text-align: center;
  line-height: 32px;
}

.p1 { font: 15px/32px "Liberation Sans", sans-serif; letter-spacing: -.5px; }
.p2 { font: 13px/32px "Liberation Sans", sans-serif; letter-spacing: -.5px; }
.p3 { font: 700 32px/32px "Liberation Serif", serif; }
.p4 { font: 700 23px/32px "Liberation Sans", sans-serif; }
.p5 { font: 700 23px/32px "Liberation Serif", serif; }
.p6 { font: 23px/32px "Liberation Sans", sans-serif; }

.st-n {
  margin-top: 4px;
  font-size: 13px;
  color: #666;
  line-height: 18px;
  white-space: nowrap;
}

.st-n small {
  font-size: 9px;
}

.st-scroll {
  flex: 1;
  display: flex;
  flex-direction: column;
  border-left: 1px solid #d8d8d8;
  background: #fff;
}

.st-scroll span {
  flex: 1;
  display: flex;
  align-items: center;
  justify-content: center;
  font-size: 10px;
  color: #555;
  border-bottom: 1px solid #d8d8d8;
}

.st-scroll .st-off {
  color: #bbb;
  background: #ececec;
}

.st-scroll .st-more {
  text-decoration: overline;
  border-bottom: 0;
}

.edit {
  display: flex;
  flex-direction: column;
  padding: 1px 0 0 15px;
  font-size: 13.500px;
  color: #333;
}

.edit span {
  height: 27.500px;
  display: flex;
  align-items: center;
  gap: 3px;
  white-space: nowrap;
}

.edit-arrow {
  margin-left: 4px;
}

.collapse {
  position: absolute;
  right: 14px;
  bottom: 7px;
}

.w-main {
  height: 653px;
  display: flex;
}

/* navigation pane */
.nav {
  width: 416px;
  padding: 0 0 0 17px;
  overflow: hidden;
  background: #e6e6e6;
  border-right: 1px solid #d4d4d4;
}

.nav-head {
  height: 67px;
  display: flex;
  align-items: center;
  padding-right: 22px;
}

.nav-head h2 {
  margin: 0 auto 4px 0;
  font-size: 23px;
  font-weight: 400;
  color: #2b6ca8;
}

.nav-head > svg {
  margin-bottom: 8px;
}

.nav-x {
  margin-left: 37px;
}

.nav-search {
  width: 376px;
  height: 28px;
  display: flex;
  align-items: center;
  gap: 6px;
  padding: 0 6px 0 3px;
  font-size: 14px;
  color: #777;
  background: #fff;
  border: 1px solid #ababab;
}

.nav-search span {
  margin-right: auto;
}

.nav-tabs {
  height: 50px;
  padding-top: 20px;
  display: flex;
  gap: 29px;
  font-size: 14.500px;
  color: #555;
}

.nav-tabs .nt-on {
  height: 30px;
  font-weight: 700;
  color: #2b579a;
  border-bottom: 3px solid #2b579a;
}

.nav-list {
  margin: 9px 0 0 -17px;
  padding: 0;
  list-style: none;
  font-size: 14.500px;
  color: #5c5c5c;
}

.nav-list li {
  position: relative;
  height: 25px;
  line-height: 25px;
  white-space: nowrap;
}

.l1 { padding-left: 41px; }
.l2 { padding-left: 61px; }
.l3 { padding-left: 80px; }

.open::before {
  content: "";
  position: absolute;
  top: 9px;
  border-left: 8px solid transparent;
  border-bottom: 8px solid #444;
}

.l1.open::before { left: 22px; }
.l2.open::before { left: 41px; }

.cur {
  margin: 0 0 0 55px;
  padding-left: 6px;
  background: #bdd0ec;
}

/* document area */
.doc {
  flex: 1;
  display: flex;
  background: #fcfcfc;
  padding-left: 157px;
}

.page {
  position: relative;
  width: 798px;
  height: 100%;
  padding: 0 24px;
  font-family: "Liberation Sans", "Noto Sans CJK SC", sans-serif;
  font-size: 21.500px;
  color: #333;
  background: #fff;
  border-left: 2px solid #e2e2e2;
  border-right: 3px solid #e2e2e2;
}

.doc-line {
  margin: 0 0 0 1px;
  height: 22px;
  line-height: 26px;
}

.radio-row {
  display: flex;
  align-items: center;
  height: 28px;
  margin: 0 0 0 21px;
  position: relative;
  z-index: 1;
}

.radio-row:nth-of-type(1) {
  margin-top: 84px;
}

.radio-row + .radio-row {
  margin-top: 21px;
  background: #fff;
  width: 358px;
}

.radio {
  flex: none;
  width: 24px;
  height: 24px;
  margin-right: 5px;
  margin-top: 4px;
  background: #fff;
  border: 2px solid #666;
  border-radius: 50%;
}

.radio-on {
  background: radial-gradient(circle, #333 0 7px, #fff 8px);
}

.ip-frame {
  height: 330px;
  margin: -11px 0 0 1px;
  padding: 32px 0 0 27px;
  width: 745px;
  border: 1px solid #e0e0e0;
}

.ip-row {
  display: flex;
  align-items: center;
  height: 46px;
  margin-bottom: 15px;
}

.ip-row > span {
  width: 363px;
  padding-bottom: 6px;
}

.ip-box {
  width: 258px;
  height: 46px;
  display: flex;
  align-items: center;
  padding: 0 3px 0 7px;
  font-size: 22px;
  background: #fff;
  border: 1px solid #888;
  border-top-width: 2px;
  border-bottom-width: 2px;
  box-shadow: inset 0 0 0 5px #c4e4c8;
}

.ip-box b {
  flex: 1;
  font-weight: 400;
  text-align: center;
  line-height: 30px;
  align-self: stretch;
  margin: 4px 0;
  background: #fff;
  border-right: 2px solid #c4e4c8;
}

.ip-box b:last-child {
  border-right: 0;
}

.ip-box em {
  font-style: normal;
  width: 6px;
  margin-left: -6px;
  font-weight: 700;
  position: relative;
  top: 4px;
}

.scroll {
  width: 17px;
  margin-left: 236px;
  display: flex;
  flex-direction: column;
  background: #e8e8e8;
  border-left: 1px solid #dcdcdc;
}

.sb-up {
  height: 17px;
  margin-top: 4px;
  display: flex;
  align-items: center;
  justify-content: center;
  background: #fff;
  border: 1px solid #ccc;
}

.sb-thumb {
  height: 19px;
  margin-top: 247px;
  background: #fff;
  border: 1px solid #bbb;
}

.sb-mark {
  height: 8px;
  margin: 19px 0 0 6px;
  background: #555;
}

.w-status {
  height: 25px;
  display: flex;
  align-items: center;
  padding: 0 0 4px 9px;
  gap: 24px;
  overflow: hidden;
  white-space: nowrap;
  font-size: 14.800px;
  color: #444;
  background: #ececec;
  border-top: 1px solid #d0d0d0;
}

.w-desk {
  position: relative;
  height: 18px;
  background: #181808;
  border-top: 1px solid #888;
  border-bottom: 1px solid #bbb;
  overflow: hidden;
}

.w-desk i {
  position: absolute;
  bottom: 0;
  height: 4px;
}

.d-white { left: 26px; width: 16px; background: #ddd; }
.d-ring { left: 85px; width: 12px; height: 5px !important; border: 2px solid #aaa; border-bottom: 0; border-radius: 6px 6px 0 0; }
.d-dome { left: 136px; width: 22px; height: 6px !important; background: #1469b8; border-radius: 11px 11px 0 0; }
.d-blue { left: 194px; width: 10px; height: 8px !important; background: #3f86f0; }
.d-yel { left: 205px; width: 10px; height: 8px !important; background: #fbbc10; }
.d-folder { left: 250px; width: 26px; background: #e8cc7a; }
.d-puff { left: 310px; width: 24px; height: 6px !important; background: #9f98d8; border-radius: 50%; }

.pen-bar {
  height: 30px;
  display: flex;
  align-items: center;
  justify-content: space-between;
  padding: 0 8px 5px 4px;
  background: #000;
  width: 340px;
}

.pen-sep {
  width: 1px;
  height: 20px;
  background: #444;
}

.pen-on {
  width: 25px;
  height: 25px;
  display: flex;
  align-items: center;
  justify-content: center;
  border: 2px solid #e00;
}

.pointer {
  position: absolute;
  left: 530px;
  top: 254px;
  width: 26px;
  height: 26px;
  z-index: 2;
}

.highlight {
  position: absolute;
  left: 1223px;
  top: 466px;
  width: 58px;
  height: 60px;
  border-radius: 50%;
  background: #ffff00;
  mix-blend-mode: multiply;
}

/* VLC controls */
.vlc-ctl {
  height: 52px;
  background: #f0f0f0;
  display: flex;
  flex-direction: column;
}

.seek {
  height: 20px;
  display: flex;
  align-items: center;
  padding-left: 8px;
}

.time {
  width: 58px;
  font: 13px "Liberation Mono", monospace;
  color: #222;
}

.seek-track {
  width: 421px;
  height: 9px;
  border-radius: 4px 0 0 4px;
  background: #2b7cca;
}

.ctl-row {
  display: flex;
  align-items: center;
  padding-left: 4px;
  gap: 16px;
}

.cb-group {
  display: flex;
  gap: 4px;
}

.cb {
  width: 22px;
  height: 22px;
  padding: 0;
  display: flex;
  align-items: center;
  justify-content: center;
  background: #f6f6f6;
  border: 1px solid #d2d2d2;
  border-radius: 3px;
}

.cb-play {
  width: 29px;
  height: 29px;
  background: #fafafa;
}

/* explorer window */
.explorer {
  position: absolute;
  left: 487px;
  top: 556px;
  width: 1433px;
  height: 464px;
  color: #111;
  font-size: 15.200px;
  background: #fff;
  border-radius: 8px 0 0 0;
  box-shadow: 0 0 22px rgba(0, 0, 0, .22);
}

.explorer::after {
  content: "";
  position: absolute;
  left: 0;
  bottom: 0;
  width: 1016px;
  height: 1px;
  background: #b8b8b8;
}

.ex-title {
  height: 36px;
  padding-bottom: 2px;
  display: flex;
  align-items: center;
  gap: 6px;
  padding-left: 10px;
}

.ex-nav {
  height: 64px;
  display: flex;
  align-items: center;
  padding-left: 16px;
  padding-bottom: 5px;
}

.ex-dim {
  margin-right: 22px;
}

.ex-dim + .ex-dim + .ex-dim {
  margin-right: 23px;
}

.ex-up {
  margin-right: 18px;
}

.ex-addr {
  flex: 1;
  height: 41px;
  display: flex;
  align-items: center;
  gap: 8px;
  padding-left: 12px;
  border: 1px solid #d8d8d8;
  border-right: 0;
}

.ex-crumb {
  color: #555;
  margin-right: 5px;
}

.ex-tools {
  height: 37px;
  padding: 0 0 2px 22px;
  display: flex;
  align-items: center;
  gap: 35.500px;
  color: #333;
  background: #f3f4f6;
  border-bottom: 1px solid #e4e4e4;
}

.ex-tools span {
  display: flex;
  align-items: center;
  gap: 5px;
}

.ex-list {
  display: flex;
  padding: 8px 0 0 17px;
}

.tile {
  width: 315px;
  height: 66px;
  display: flex;
  padding: 1px 0 0 5px;
  border: 1px solid transparent;
  border-radius: 1px;
}

.tile-on {
  width: 310px;
  margin-right: 5px;
  background: #cce8ff;
  border-color: #99d1ff;
}

.t-icon {
  position: relative;
  width: 65px;
  flex: none;
}

.t-net {
  position: absolute;
  left: -3px;
  top: 0;
}

.t-badge {
  position: absolute;
  left: 24px;
  top: 34px;
}

.t-x {
  position: absolute;
  left: 0;
  top: 42px;
}

.t-text {
  display: flex;
  flex-direction: column;
  color: #6d6d6d;
  font-size: 15.700px;
  line-height: 20.500px;
  white-space: nowrap;
}

.t-main {
  color: #111;
  width: 200px;
  white-space: normal;
}

/* taskbar */
.taskbar {
  height: 60px;
  display: flex;
  align-items: center;
  background: linear-gradient(90deg, #dce6f2 0, #e6ecf3 480px, #efefef 720px);
}

.apps {
  display: flex;
  width: 1000px;
  padding-left: 14px;
}

.app {
  position: relative;
  width: 54.600px;
  height: 48px;
  display: flex;
  align-items: center;
  justify-content: center;
}

.app-dot::after,
.app-on::after {
  content: "";
  position: absolute;
  left: 50%;
  bottom: 0;
  width: 8px;
  height: 3px;
  margin-left: -4px;
  border-radius: 2px;
  background: #8a8a8a;
}

.app-on {
  width: 47px;
  margin: 0 3.800px;
  background: #f3f6fb;
  border-radius: 5px;
  box-shadow: 4px 0 0 -1px #e8edf4;
}

.app-on::after {
  width: 18px;
  margin-left: -9px;
  background: #2e8a9a;
}

.t-app {
  width: 26px;
  height: 26px;
  text-align: center;
  font: 700 20px/26px "Liberation Serif", serif;
  color: #222;
  background: #fff;
  border-radius: 5px;
  box-shadow: 0 1px 2px #bbb;
}

.baidu {
  width: 29px;
  height: 29px;
  display: flex;
  align-items: center;
  justify-content: center;
  background: #fff;
  border-radius: 6px;
}

.tray {
  flex: 1;
  display: flex;
  align-items: center;
  padding-left: 512px;
  gap: 12px;
}

.t-zh {
  margin: 0 12px 0 6px;
  display: flex;
}

.t-s {
  width: 17px;
  height: 17px;
  margin: 0 17px 0 2px;
  text-align: center;
  font: 700 15px/17px "Liberation Sans", sans-serif;
  color: #fff;
  background: #f0501e;
  border-radius: 2px;
  transform: rotate(-12deg);
}

.t-spk {
  margin-left: -5px;
}

.t-bat {
  margin-left: -2px;
}

.clock {
  width: 79px;
  display: flex;
  flex-direction: column;
  align-items: flex-end;
  font-size: 13.500px;
  line-height: 20px;
  color: #333;
}

.badge {
  width: 20px;
  height: 20px;
  margin-left: -3px;
  text-align: center;
  line-height: 20px;
  font-size: 13px;
  color: #fff;
  background: #2a8299;
  border-radius: 50%;
}
```
